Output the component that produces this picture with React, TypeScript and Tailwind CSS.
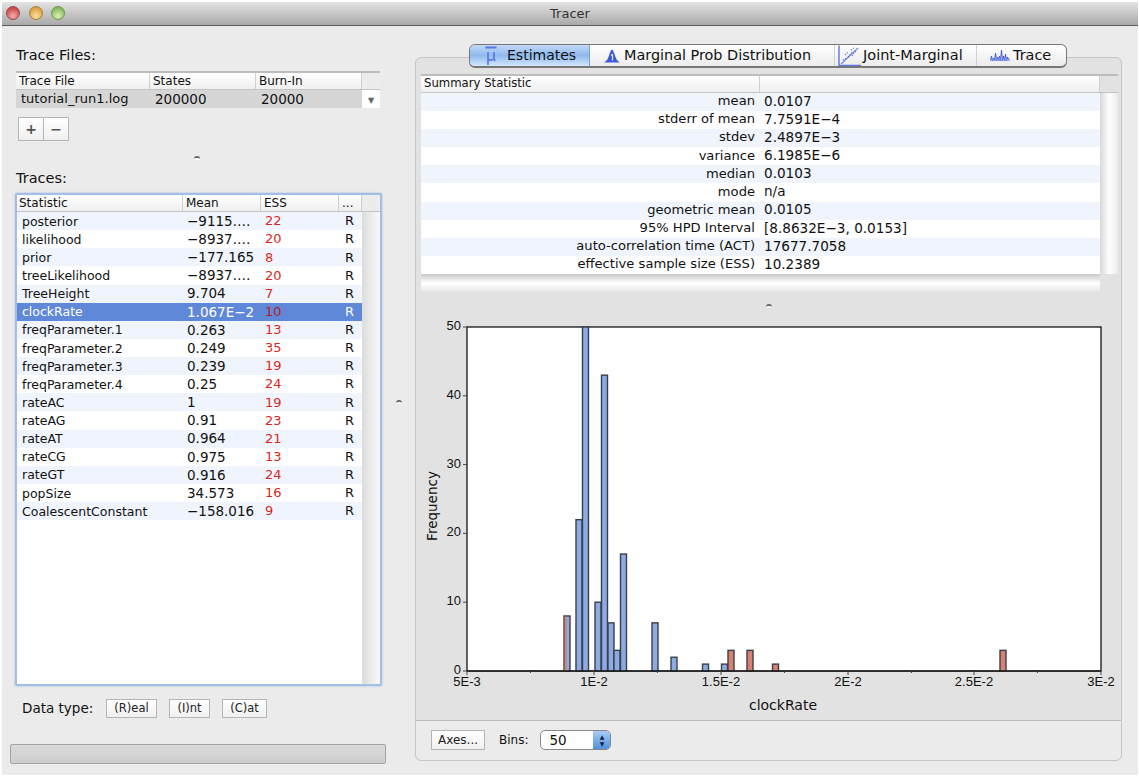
const TRACES = [
  { name: 'posterior', mean: '−9115.…', ess: '22' },
  { name: 'likelihood', mean: '−8937.…', ess: '20' },
  { name: 'prior', mean: '−177.165', ess: '8' },
  { name: 'treeLikelihood', mean: '−8937.…', ess: '20' },
  { name: 'TreeHeight', mean: '9.704', ess: '7' },
  { name: 'clockRate', mean: '1.067E−2', ess: '10' },
  { name: 'freqParameter.1', mean: '0.263', ess: '13' },
  { name: 'freqParameter.2', mean: '0.249', ess: '35' },
  { name: 'freqParameter.3', mean: '0.239', ess: '19' },
  { name: 'freqParameter.4', mean: '0.25', ess: '24' },
  { name: 'rateAC', mean: '1', ess: '19' },
  { name: 'rateAG', mean: '0.91', ess: '23' },
  { name: 'rateAT', mean: '0.964', ess: '21' },
  { name: 'rateCG', mean: '0.975', ess: '13' },
  { name: 'rateGT', mean: '0.916', ess: '24' },
  { name: 'popSize', mean: '34.573', ess: '16' },
  { name: 'CoalescentConstant', mean: '−158.016', ess: '9' },
]

const SUMMARY = [
  ['mean', '0.0107'],
  ['stderr of mean', '7.7591E−4'],
  ['stdev', '2.4897E−3'],
  ['variance', '6.1985E−6'],
  ['median', '0.0103'],
  ['mode', 'n/a'],
  ['geometric mean', '0.0105'],
  ['95% HPD Interval', '[8.8632E−3, 0.0153]'],
  ['auto-correlation time (ACT)', '17677.7058'],
  ['effective sample size (ESS)', '10.2389'],
]

const BLUE = '#8dabe2'
const RED = '#d9806f'

// x is the left edge in page pixels, v the count
const BARS = [
  { x: 564, v: 8, c: BLUE },
  { x: 576, v: 22, c: BLUE },
  { x: 582.5, v: 50, c: BLUE },
  { x: 595, v: 10, c: BLUE },
  { x: 601.5, v: 43, c: BLUE },
  { x: 608, v: 7, c: BLUE },
  { x: 614, v: 3, c: BLUE },
  { x: 620.5, v: 17, c: BLUE },
  { x: 652, v: 7, c: BLUE },
  { x: 671, v: 2, c: BLUE },
  { x: 702.5, v: 1, c: BLUE },
  { x: 721.5, v: 1, c: BLUE },
  { x: 728, v: 3, c: RED },
  { x: 747, v: 3, c: RED },
  { x: 772.5, v: 1, c: RED },
  { x: 1000, v: 3, c: RED },
]

const X_TICKS = [
  { x: 467, label: '5E-3' },
  { x: 594, label: '1E-2' },
  { x: 721, label: '1.5E-2' },
  { x: 848, label: '2E-2' },
  { x: 974, label: '2.5E-2' },
  { x: 1101, label: '3E-2' },
]

const Y_TICKS = [0, 10, 20, 30, 40, 50]

function Chart() {
  // the svg starts at x=416, y=311 of the page
  const ox = 416
  const oy = 311
  const bottom = 670 - oy
  const top = 326 - oy
  const scale = (bottom - top) / 50
  return (
    <svg width="705" height="409" className="block">
      <rect x={467 - ox} y={top} width={634} height={bottom - top} fill="#fff" stroke="#000" strokeWidth="1.2" />
      {BARS.map((b) => (
        <rect
          key={b.x}
          x={b.x - ox}
          y={bottom - b.v * scale}
          width={6}
          height={b.v * scale}
          fill={b.c}
          stroke="#39404c"
          strokeWidth="1.4"
        />
      ))}
      {/* the first bar holds both colours */}
      <rect x={564.7 - ox} y={bottom - 8 * scale + 0.7} width={2} height={8 * scale - 0.7} fill={RED} />
      <line x1={467 - ox} x2={1101 - ox} y1={bottom} y2={bottom} stroke="#000" strokeWidth="1.2" />
      {X_TICKS.map((t) => (
        <g key={t.label}>
          <line x1={t.x - ox} x2={t.x - ox} y1={bottom} y2={bottom + 4} stroke="#444" />
          <text x={t.x - ox} y={bottom + 15} textAnchor="middle" fontSize="13" fill="#111" fontFamily="'Liberation Sans', sans-serif">
            {t.label}
          </text>
        </g>
      ))}
      {X_TICKS.slice(0, -1).map((t) => (
        <line key={t.x} x1={t.x - ox + 63.4} x2={t.x - ox + 63.4} y1={bottom} y2={bottom + 2} stroke="#444" />
      ))}
      {Y_TICKS.map((v) => (
        <g key={v}>
          <line x1={463 - ox} x2={467 - ox} y1={bottom - v * scale} y2={bottom - v * scale} stroke="#444" />
          <text x={461 - ox} y={bottom - v * scale + 3} textAnchor="end" fontSize="13" fill="#111" fontFamily="'Liberation Sans', sans-serif">
            {v}
          </text>
        </g>
      ))}
      <text x={783 - ox} y={398} textAnchor="middle" fontSize="14" fill="#111" fontFamily="'DejaVu Sans', sans-serif">
        clockRate
      </text>
      <text
        transform={`translate(${437 - ox} ${505 - oy}) rotate(-90)`}
        x={0}
        y={0}
        textAnchor="middle"
        fontSize="13.5"
        fill="#111"
        fontFamily="'DejaVu Sans', sans-serif"
      >
        Frequency
      </text>
    </svg>
  )
}

function MuIcon() {
  return (
    <svg width="14" height="20" viewBox="0 0 14 20" fill="none" stroke="#5a74e0" strokeWidth="1.6">
      <path d="M1.5 1.5h11" strokeWidth="1.8" />
      <path d="M4 6v8.5M10 6v8M4 13c1.2 1.5 5 1.5 6 -.5M4 14v5M10 14l1.5 .5" />
    </svg>
  )
}

function PeakIcon() {
  return (
    <svg width="18" height="14" viewBox="0 0 18 14">
      <path d="M0.5 13.5h17c-3 -.5 -4.5 -4 -5.5 -7c-1 -3 -2 -6 -3 -6s-2 3 -3 6c-1 3 -2.500 6.500 -5.500 7z" fill="#3f5ad8" />
      <path d="M8 6.500l1.500 -1v6" stroke="#dfe6fb" strokeWidth="1.200" fill="none" />
    </svg>
  )
}

function JointIcon() {
  return (
    <svg width="23" height="22" viewBox="0 0 23 22" fill="none">
      <path d="M1 0.500v20h22" stroke="#5a74e0" strokeWidth="1.400" />
      <path d="M3 19L20 3" stroke="#6f86e6" strokeWidth="1.200" />
      <path d="M7 10l3 -3M10 12l5 -6M13 5l3 -2M14 11l4 -5M5 15l4 -2" stroke="#4a64dc" strokeWidth="1.200" strokeDasharray="1 1.500" />
    </svg>
  )
}

function TraceIcon() {
  return (
    <svg width="20" height="14" viewBox="0 0 20 14" fill="none">
      <path
        d="M0.500 11l1 -4l1 5l1 -3l1 3l1 -8l1 8l1 -4l1 4l1 -5l1 5l1 -11l1 11l1 -5l1 5l1 -7l1 7l1 -4l1 2"
        stroke="#3f5ad8"
        strokeWidth="1"
      />
      <path d="M0 11h20" stroke="#7d92ea" strokeWidth="1.500" />
    </svg>
  )
}

function SplitDot() {
  return <span className="block h-[4px] w-[6px] rounded-t-full border-t-2 border-[#666] bg-white" />
}

function SquareButton({ label, className }: { label: string; className: string }) {
  return (
    <button className={`flex h-[19px] items-center justify-center border border-[#b5b5b5] bg-gradient-to-b from-white to-[#f0f0f0] text-[11.500px] text-[#222] ${className}`}>
      {label}
    </button>
  )
}

function HeaderCell({ label, className }: { label: string; className: string }) {
  return (
    <div className={`flex h-full shrink-0 items-center border-r border-[#d0d0d0] ${className}`}>
      {label}
    </div>
  )
}

export default function App() {
  return (
    <div className="h-[779px] w-[1139px] overflow-hidden bg-white pl-[2px] pt-[2px] font-['DejaVu_Sans',sans-serif]">
      <div className="flex h-[773px] w-[1136px] flex-col bg-[#ebebeb]">
        {/* Title bar */}
        <div className="relative flex h-[24px] shrink-0 items-center justify-center border-b border-[#5c5c5c] bg-gradient-to-b from-[#e4e4e4] to-[#a9a9a9]">
          <div className="absolute left-[4px] top-[4px] flex gap-[8.500px]">
            <span className="h-[14px] w-[14px] rounded-full border border-[#9a4a4a] bg-[radial-gradient(circle_at_50%_75%,#f4b0b0,#cf4444_75%)]" />
            <span className="h-[14px] w-[14px] rounded-full border border-[#a5803a] bg-[radial-gradient(circle_at_50%_75%,#f8e2a0,#dba03c_75%)]" />
            <span className="h-[14px] w-[14px] rounded-full border border-[#6c9a4c] bg-[radial-gradient(circle_at_50%_75%,#dcf2b0,#84b860_75%)]" />
          </div>
          <span className="text-[13px] text-[#333]">Tracer</span>
        </div>

        <div className="flex min-h-0 flex-1">
          {/* Left column */}
          <div className="flex w-[413px] shrink-0 flex-col">
            <div className="ml-[14px] mt-[21px] text-[14.500px] leading-[16px] text-[#111]">Trace Files:</div>

            <div className="ml-[14px] mt-[8px] w-[364px] border-t-2 border-[#bdbdbd]">
              <div className="flex h-[17px] border-b border-[#c4c4c4] bg-gradient-to-b from-white to-[#efefef] text-[12px] text-[#111]">
                <HeaderCell label="Trace File" className="w-[134px] pl-[3px]" />
                <HeaderCell label="States" className="w-[106px] pl-[3px]" />
                <HeaderCell label="Burn-In" className="w-[106px] pl-[3px]" />
                <div className="flex-1 bg-[#ececec]" />
              </div>
              <div className="flex h-[18px] items-center bg-[#d6d6d6] text-[13px] text-[#111]">
                <span className="w-[134px] pl-[5px]">tutorial_run1.log</span>
                <span className="w-[106px] pl-[5px] text-[13.500px]">200000</span>
                <span className="w-[106px] pl-[5px] text-[13.500px]">20000</span>
                <span className="flex h-full flex-1 items-center justify-center bg-white pt-[3px] text-[8px] text-[#666]">▼</span>
              </div>
            </div>

            <div className="ml-[16px] mt-[9px] flex h-[24px] w-[51px] border border-[#b5b5b5] bg-gradient-to-b from-white to-[#f0f0f0] text-[14px] font-bold text-[#555]">
              <span className="flex w-[25px] items-center justify-center border-r border-[#b5b5b5]">+</span>
              <span className="flex flex-1 items-center justify-center">−</span>
            </div>

            <div className="ml-[192px] mt-[15px] flex h-[4px]">
              <SplitDot />
            </div>

            <div className="ml-[14px] mt-[10px] text-[14.500px] leading-[16px] text-[#111]">Traces:</div>

            <div className="ml-[13px] mt-[7px] w-[367px] rounded-[2px] border-2 border-[#a3bfe4] bg-white shadow-[0_0_2px_#8fb0dc]">
              <div className="flex h-[17px] border-b border-[#c4c4c4] bg-gradient-to-b from-white to-[#efefef] text-[12px] text-[#111]">
                <HeaderCell label="Statistic" className="w-[166px] pl-[2px]" />
                <HeaderCell label="Mean" className="w-[78px] pl-[3px]" />
                <HeaderCell label="ESS" className="w-[78px] pl-[3px]" />
                <HeaderCell label="..." className="w-[23px] pl-[3px]" />
                <div className="flex-1 bg-[#ececec]" />
              </div>
              <div className="flex h-[472px]">
                <div className="w-[345px]">
                  {TRACES.map((t, i) => {
                    const selected = t.name === 'clockRate'
                    return (
                      <div
                        key={t.name}
                        className={`flex h-[18.125px] items-center ${
                          selected ? 'bg-[#6088d8] text-white' : i % 2 === 0 ? 'bg-[#f0f5fd] text-[#111]' : 'bg-white text-[#111]'
                        }`}
                      >
                        <span className="mt-[2px] w-[166px] pl-[5px] text-[12.500px]">{t.name}</span>
                        <span className="w-[78px] pl-[4px] text-[13.500px]">{t.mean}</span>
                        <span className={`w-[78px] pl-[4px] text-[13px] ${selected ? 'text-[#b81c1c]' : 'text-[#d8281c]'}`}>{t.ess}</span>
                        <span className="pl-[6px] text-[13px]">R</span>
                      </div>
                    )
                  })}
                </div>
                <div className="flex-1 bg-gradient-to-r from-[#dcdcdc] to-[#fafafa]" />
              </div>
            </div>

            <div className="ml-[20px] mt-[12px] flex items-center">
              <span className="w-[84px] text-[13.500px] text-[#111]">Data type:</span>
              <SquareButton label="(R)eal" className="w-[51px]" />
              <SquareButton label="(I)nt" className="ml-[12px] w-[41px]" />
              <SquareButton label="(C)at" className="ml-[12px] w-[45px]" />
            </div>

            <div className="ml-[8px] mt-[26px] h-[20px] w-[376px] rounded-[2px] border border-[#a4a4a4] bg-gradient-to-b from-[#dadada] to-[#cdcdcd]" />
          </div>

          {/* Right column */}
          <div className="relative flex min-w-0 flex-1 flex-col pt-[31px]">
            <div className="flex h-[704px] w-[707px] flex-col rounded-[6px] border border-[#c6c6c6] bg-[#e2e2e2]">
              {/* Tabs */}
              <div className="z-10 ml-[53px] mt-[-14px] flex h-[24px] w-[598px] shrink-0 overflow-hidden rounded-[6px] border border-b-2 border-[#777] bg-gradient-to-b from-white to-[#ececec] text-[#111]">
                <div className="flex w-[120px] items-center gap-[9px] border-r border-[#7aa0d0] bg-gradient-to-b from-[#c2d9f7] via-[#8fb9ee] to-[#d2e7fc] pl-[14px] text-[14px]">
                  <MuIcon />
                  <span>Estimates</span>
                </div>
                <div className="flex w-[245px] items-center gap-[3px] border-r border-[#d0d0d0] pl-[13px] text-[14.400px]">
                  <PeakIcon />
                  <span>Marginal Prob Distribution</span>
                </div>
                <div className="flex w-[142px] items-center gap-[2px] border-r border-[#d0d0d0] pl-[3px] text-[14.500px]">
                  <JointIcon />
                  <span>Joint-Marginal</span>
                </div>
                <div className="flex flex-1 items-center gap-[3px] pl-[13px] text-[14.400px]">
                  <TraceIcon />
                  <span>Trace</span>
                </div>
              </div>

              {/* Summary table */}
              <div className="ml-[5px] mt-[6px] flex h-[218px] w-[697px] shrink-0 flex-col border-t-2 border-[#bdbdbd]">
                <div className="flex h-[17px] shrink-0 border-b border-[#c4c4c4] bg-gradient-to-b from-white to-[#efefef] text-[11.700px] text-[#111]">
                  <HeaderCell label="Summary Statistic" className="w-[339px] pl-[3px]" />
                  <HeaderCell label="" className="w-[340px] pl-[3px]" />
                  <div className="flex-1 bg-[#e2e2e2]" />
                </div>
                <div className="flex">
                  <div className="w-[679px]">
                    {SUMMARY.map(([k, v], i) => (
                      <div key={k} className={`flex h-[18.100px] items-center pb-[2px] text-[#111] ${i % 2 === 0 ? 'bg-[#f0f5fd]' : 'bg-white'}`}>
                        <span className="w-[334px] text-right text-[13.100px]">{k}</span>
                        <span className="ml-[9px] text-[13.600px]">{v}</span>
                      </div>
                    ))}
                  </div>
                  <div className="flex-1 bg-gradient-to-r from-[#d8d8d8] via-white to-[#ececec]" />
                </div>
                <div className="h-[18px] w-[679px] bg-gradient-to-b from-[#c8c8c8] via-white to-[#e6e6e6]" />
              </div>

              <div className="ml-[350px] mt-[12px] flex h-[4px]">
                <SplitDot />
              </div>

              {/* Chart */}
              <div className="mt-[4px] h-[409px] shrink-0 border-b border-[#bdbdbd]">
                <Chart />
              </div>

              {/* Bottom toolbar */}
              <div className="flex flex-1 items-center rounded-b-[6px] bg-[#ebebeb] pb-[2px] pl-[15px]">
                <SquareButton label="Axes..." className="h-[20px] w-[54px] text-[12px]" />
                <span className="ml-[14px] text-[12px] text-[#111]">Bins:</span>
                <div className="ml-[12px] flex h-[20px] w-[71px] overflow-hidden rounded-[5px] border border-[#888] bg-white text-[13.500px] text-[#111]">
                  <span className="flex-1 pl-[8px] leading-[18px]">50</span>
                  <span className="flex w-[17px] flex-col items-center justify-center bg-gradient-to-b from-[#a8ccf4] to-[#4f90e0] text-[6px] leading-[7px] text-[#123]">
                    <span>▲</span>
                    <span>▼</span>
                  </span>
                </div>
              </div>
            </div>

            {/* Left/right divider handle */}
            <div className="absolute left-[-19px] top-[374px] h-[4px] w-[6px]">
              <SplitDot />
            </div>
          </div>
        </div>
      </div>
    </div>
  )
}
